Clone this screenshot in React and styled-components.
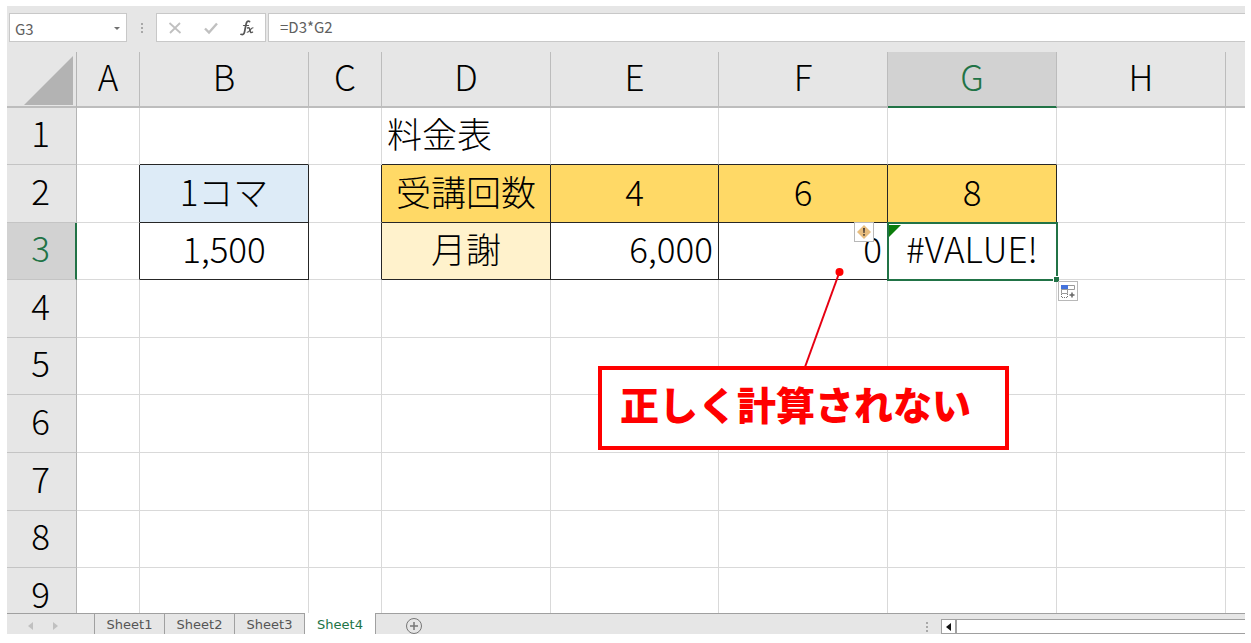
import React, { useState } from 'react';
import styled, { createGlobalStyle, css } from 'styled-components';

const GlobalStyle = createGlobalStyle`
    * {
        box-sizing: border-box;
    }
    body {
        margin: 0;
        background-color: #ffffff;
        font-family: "Noto Sans CJK JP", "Noto Sans", sans-serif;
    }
    button, input {
        margin: 0;
        padding: 0;
        border: none;
        border-radius: 0;
        background: none;
        font: inherit;
        color: inherit;
    }
`;

const Window = styled.div`
    display: flex;
    flex-direction: column;
    height: 100vh;
    padding: 6px 6px 9px 7px;
    overflow: hidden;
`;

const FormulaBar = styled.div`
    display: flex;
    flex-shrink: 0;
    height: 46px;
    padding: 7px 0 10px 2px;
    background-color: #e6e6e6;
    color: #606060;
    font-size: 15px;
`;

const BarBox = styled.div`
    display: flex;
    align-items: center;
    border: 1px solid #c8c8c8;
    background-color: #ffffff;
`;

const NameBox = styled(BarBox)`
    width: 118px;
    padding: 2px 5px 0 5px;
`;

const BarInput = styled.input`
    flex: 1;
    min-width: 0;
    height: 24px;
    outline: none;
    font-kerning: none;
`;

const Actions = styled(BarBox)`
    width: 110px;
    justify-content: space-around;
    margin-right: 2px;
`;

const FormulaBox = styled(BarBox)`
    flex: 1;
    padding: 0 0 2px 11px;
    border-right: none;
`;

const IconButton = styled.button`
    display: flex;
    align-items: center;
    justify-content: center;
    cursor: pointer;
`;

const Grip = styled.div`
    display: flex;
    flex-direction: column;
    align-items: center;
    justify-content: center;
    gap: 2px;
    width: 29px;
    &::before, &::after, span {
        content: '';
        width: 2px;
        height: 2px;
        background-color: #a8a8a8;
    }
`;

const Sheet = styled.div`
    position: relative;
    flex: 1;
    min-height: 0;
    overflow: hidden;
`;

const Table = styled.table`
    width: 100%;
    table-layout: fixed;
    border-collapse: separate;
    border-spacing: 0;
    font-size: 35px;
    font-weight: 300;
    font-kerning: none;
    line-height: 40px;
    color: #000000;
    white-space: nowrap;
`;

const Corner = styled.th`
    height: 56px;
    padding: 3px 3px 0 17px;
    border-right: 1px solid #b4b4b4;
    border-bottom: 2px solid #bdbdbd;
    background-color: #e6e6e6;
    svg {
        display: block;
    }
`;

const ColHead = styled.th`
    padding: 0 0 6px;
    border-right: 1px solid #bcbcbc;
    border-bottom: 2px solid #bdbdbd;
    background-color: #e6e6e6;
    font-weight: 300;
    &:last-child {
        border-right: none;
    }
    ${({ $active }) => $active && css`
        background-color: #d2d2d2;
        border-bottom-color: #217346;
        color: #217346;
    `}
`;

const RowHead = styled.th`
    padding: 0 2px 8px 0;
    border-right: 1px solid #b4b4b4;
    border-bottom: 1px solid #c4c4c4;
    background-color: #e6e6e6;
    font-weight: 300;
    ${({ $active }) => $active && css`
        padding-right: 1px;
        border-right: 2px solid #217346;
        background-color: #d2d2d2;
        color: #217346;
    `}
`;

const Cell = styled.td`
    padding: 0 5px 6px;
    border-right: 1px solid ${({ $right }) => ($right ? '#262626' : '#d9d9d9')};
    border-bottom: 1px solid ${({ $bottom }) => ($bottom ? '#262626' : '#d9d9d9')};
    background-color: ${({ $fill }) => $fill || '#ffffff'};
    text-align: ${({ $align }) => $align || 'left'};
    &:last-child {
        border-right: none;
    }
    ${({ $active }) => $active && css`
        position: relative;
    `}
`;

const Selection = styled.div`
    position: absolute;
    inset: -1px -2px -2px -1px;
    border: 2px solid #217346;
    pointer-events: none;
    svg {
        position: absolute;
        top: 1px;
        left: 0;
    }
    &::after {
        content: '';
        position: absolute;
        right: -3px;
        bottom: -3px;
        width: 5px;
        height: 5px;
        border: 1px solid #ffffff;
        border-width: 1px 0 0 1px;
        background-color: #217346;
    }
`;

const SmartTag = styled(IconButton)`
    position: absolute;
    z-index: 1;
    width: 20px;
    height: 20px;
    border: 1px solid #b8b8b8;
    background-color: #ffffff;
`;

const ErrorTag = styled(SmartTag)`
    top: -1px;
    left: -34px;
`;

const FillTag = styled(SmartTag)`
    top: 58px;
    left: 170px;
`;

const Leader = styled.svg`
    position: absolute;
    top: 214px;
    left: 792px;
`;

const Callout = styled.div`
    position: absolute;
    top: 314px;
    left: 591px;
    width: 411px;
    height: 84px;
    padding: 7px 0 0 18px;
    border: 4px solid #ff0000;
    background-color: #ffffff;
    color: #ff0000;
    font-size: 39px;
    font-weight: 900;
    line-height: 52px;
    white-space: nowrap;
`;

const Footer = styled.div`
    display: flex;
    flex-shrink: 0;
    height: 21px;
    overflow: hidden;
    background-color: #e6e6e6;
    box-shadow: inset 0 1px 0 #a0a0a0;
    color: #555555;
    font-family: "DejaVu Sans", sans-serif;
    font-size: 13px;
`;

const TabNav = styled.div`
    display: flex;
    align-items: center;
    gap: 20px;
    width: 87px;
    padding: 5px 0 0 21px;
`;

const Tab = styled.button`
    width: 70px;
    padding-top: 3px;
    border-left: 1px solid #a0a0a0;
    line-height: 18px;
    cursor: pointer;
    ${({ $active }) => $active && css`
        width: 72px;
        border-right: 1px solid #a0a0a0;
        background-color: #ffffff;
        color: #217346;
    `}
`;

const AddTab = styled(IconButton)`
    align-items: flex-start;
    margin-left: 29px;
    padding-top: 4px;
`;

const FooterGrip = styled(Grip)`
    margin-left: auto;
    padding-top: 6px;
`;

const ScrollBar = styled.div`
    display: flex;
    width: 304px;
    height: 15px;
    margin-top: 6px;
    border: 1px solid #a0a0a0;
    border-right: none;
    background-color: #ffffff;
`;

const ScrollButton = styled(IconButton)`
    width: 15px;
    border-right: 2px solid #a0a0a0;
`;

const COLS = [
    { name: 'A', width: 63 },
    { name: 'B', width: 169 },
    { name: 'C', width: 73 },
    { name: 'D', width: 169 },
    { name: 'E', width: 168 },
    { name: 'F', width: 169 },
    { name: 'G', width: 169 },
    { name: 'H', width: 169 },
    { name: '' },
];

const ROW_HEIGHTS = [57, 58, 57, 58, 57, 58, 58, 57, 58];

const CELLS = {
    D1: { value: '料金表' },
    B2: { value: '1コマ', fill: '#ddebf7', align: 'center', boxed: true },
    B3: { value: '1,500', align: 'center', boxed: true },
    D2: { value: '受講回数', fill: '#ffd966', align: 'center', boxed: true },
    E2: { value: '4', fill: '#ffd966', align: 'center', boxed: true },
    F2: { value: '6', fill: '#ffd966', align: 'center', boxed: true },
    G2: { value: '8', fill: '#ffd966', align: 'center', boxed: true },
    D3: { value: '月謝', fill: '#fff2cc', align: 'center', boxed: true },
    E3: { value: '6,000', align: 'right', boxed: true },
    F3: { value: '0', align: 'right', boxed: true },
    G3: { value: '#VALUE!', align: 'center', boxed: true },
};

const ACTIVE = { col: 'G', row: 3 };

const isBoxed = (col, row) => {
    const cell = COLS[col] && CELLS[COLS[col].name + row];
    return Boolean(cell && cell.boxed);
};

function GridCell({ col, row }) {
    const name = COLS[col].name;
    const cell = CELLS[name + row] || {};
    const active = name === ACTIVE.col && row === ACTIVE.row;

    return (
        <Cell
            $active={active}
            $fill={cell.fill}
            $align={cell.align}
            $right={isBoxed(col, row) || isBoxed(col + 1, row)}
            $bottom={isBoxed(col, row) || isBoxed(col, row + 1)}
        >
            {cell.value}
            {active && (
                <>
                    <Selection>
                        <svg width="12" height="12">
                            <path d="M0 0h12L0 12z" fill="#0b7d0b" />
                        </svg>
                    </Selection>
                    <ErrorTag aria-label="エラー チェック オプション">
                        <svg width="16" height="16" viewBox="0 0 16 16">
                            <path d="M8 1l7 7-7 7-7-7z" fill="#e8bd7e" />
                            <path d="M7 4h2l-.4 5H7.4z M7.2 10h1.6v1.7H7.2z" fill="#4a4036" />
                        </svg>
                    </ErrorTag>
                    <FillTag aria-label="オートフィル オプション">
                        <svg width="16" height="16" viewBox="0 0 16 16" fill="none">
                            <path d="M1.5 2.5h13v4h-13z M1.5 6.5h6v4h-6z M7.5 2.5v4" stroke="#9a9a9a" />
                            <path d="M1 2h7v4H1z" fill="#4472dc" />
                            <path d="M1.5 11v3.5h6V11" stroke="#777777" strokeDasharray="1 1" />
                            <path d="M12 9.5v5M9.5 12h5" stroke="#666666" strokeWidth="1.5" />
                        </svg>
                    </FillTag>
                </>
            )}
        </Cell>
    );
}

function Grid() {
    return (
        <Table>
            <colgroup>
                <col width="70" />
                {COLS.map((col) => <col key={col.name} width={col.width} />)}
            </colgroup>
            <thead>
                <tr>
                    <Corner>
                        <svg width="49" height="49">
                            <path d="M49 0v49H0z" fill="#b3b3b3" />
                        </svg>
                    </Corner>
                    {COLS.map((col) => (
                        <ColHead key={col.name} $active={col.name === ACTIVE.col}>{col.name}</ColHead>
                    ))}
                </tr>
            </thead>
            <tbody>
                {ROW_HEIGHTS.map((height, i) => (
                    <tr key={i} height={height}>
                        <RowHead $active={i + 1 === ACTIVE.row}>{i + 1}</RowHead>
                        {COLS.map((col, c) => <GridCell key={col.name} col={c} row={i + 1} />)}
                    </tr>
                ))}
            </tbody>
        </Table>
    );
}

export default function App() {

    const [formula, setFormula] = useState('=D3*G2');
    const [cellName, setCellName] = useState('G3');
    const [sheet, setSheet] = useState('Sheet4');

    return (
        <>
            <GlobalStyle />
            <Window>
                <FormulaBar>
                    <NameBox>
                        <BarInput aria-label="名前ボックス" value={cellName} onChange={(e) => setCellName(e.target.value)} />
                        <IconButton aria-label="名前の一覧">
                            <svg width="8" height="6"><path d="M1 1h6L4 4z" fill="#707070" /></svg>
                        </IconButton>
                    </NameBox>
                    <Grip><span /></Grip>
                    <Actions>
                        <IconButton aria-label="キャンセル">
                            <svg width="14" height="14" fill="none" stroke="#c0c0c0" strokeWidth="1.8">
                                <path d="M1.5 2l11 10M12 2L2 12" />
                            </svg>
                        </IconButton>
                        <IconButton aria-label="入力">
                            <svg width="14" height="14" fill="none" stroke="#c0c0c0" strokeWidth="2.4">
                                <path d="M1 7.5l4 4L13 2.5" />
                            </svg>
                        </IconButton>
                        <IconButton aria-label="関数の挿入">
                            <svg width="14" height="16" fill="none" stroke="#555555" strokeLinecap="round">
                                <path d="M9.5 1.5C7.5.5 6.5 2 6 4.5L4.5 12c-.5 2.5-1.8 3-3.5 2.3" strokeWidth="1.7" />
                                <path d="M3.5 5.5h5" strokeWidth="1.2" />
                                <path d="M7.5 8c2-.8 2 .2 2.5 2.5s1 2.5 2.5 1.7" strokeWidth="1.5" />
                                <path d="M13 7.7c-2 0-3.5 4.6-5.8 4.6" strokeWidth="1.1" />
                            </svg>
                        </IconButton>
                    </Actions>
                    <FormulaBox>
                        <BarInput aria-label="数式バー" value={formula} onChange={(e) => setFormula(e.target.value)} />
                    </FormulaBox>
                </FormulaBar>
                <Sheet>
                    <Grid />
                    <Leader width="56" height="102" fill="none">
                        <path d="M40.5 6L6 101" stroke="#e60012" strokeWidth="2" />
                        <circle cx="40.5" cy="6" r="4" fill="#ff0000" />
                    </Leader>
                    <Callout>正しく計算されない</Callout>
                </Sheet>
                <Footer>
                    <TabNav>
                        <IconButton aria-label="前のシート">
                            <svg width="5" height="8"><path d="M5 0v8L0 4z" fill="#c0c0c0" /></svg>
                        </IconButton>
                        <IconButton aria-label="次のシート">
                            <svg width="5" height="8"><path d="M0 0v8l5-4z" fill="#c0c0c0" /></svg>
                        </IconButton>
                    </TabNav>
                    {['Sheet1', 'Sheet2', 'Sheet3', 'Sheet4'].map((name) => (
                        <Tab key={name} $active={name === sheet} onClick={() => setSheet(name)}>{name}</Tab>
                    ))}
                    <AddTab aria-label="新しいシート">
                        <svg width="18" height="18" fill="none" stroke="#777777">
                            <circle cx="9" cy="9" r="7.5" />
                            <path d="M9 5v8M5 9h8" strokeWidth="1.5" />
                        </svg>
                    </AddTab>
                    <FooterGrip><span /></FooterGrip>
                    <ScrollBar>
                        <ScrollButton aria-label="左へスクロール">
                            <svg width="5" height="8"><path d="M5 0v8L0 4z" fill="#111111" /></svg>
                        </ScrollButton>
                    </ScrollBar>
                </Footer>
            </Window>
        </>
    );
}
